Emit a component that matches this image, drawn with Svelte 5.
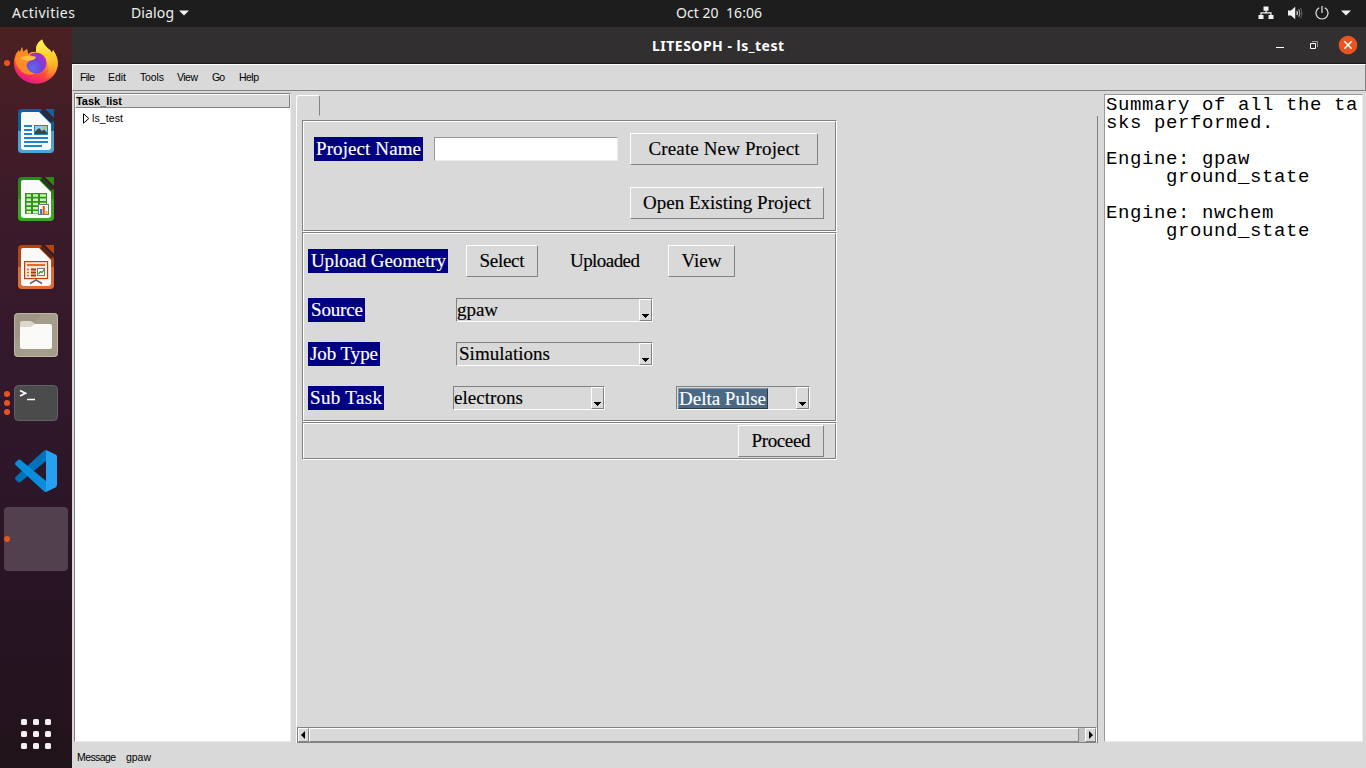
<script>
  // Spreads the letters of a label so that it takes the given width.
  function fit(node, width) {
    const natural = node.getBoundingClientRect().width;
    const gaps = Math.max(1, node.textContent.length - 1);
    node.style.letterSpacing = `${(width - natural) / gaps}px`;
    node.style.marginRight = `${-(width - natural) / gaps}px`;
  }

  const menus = [
    ['File', 15, 13], ['Edit', 18, 14], ['Tools', 24, 13],
    ['View', 21, 14], ['Go', 13, 14], ['Help', 20, 0]
  ];

  const summary = [
    'Summary of all the ta', 'sks performed.', '',
    'Engine: gpaw', '     ground_state', '',
    'Engine: nwchem', '     ground_state'
  ];

  const docs = [
    { kind: 'writer', dark: '#0e639c', light: '#4da3d4' },
    { kind: 'calc', dark: '#2b8a12', light: '#3fa527' },
    { kind: 'impress', dark: '#b3460f', light: '#dd6b33' }
  ];
</script>

{#snippet combo(text, textWidth, cls, selected)}
  <div class="combo {cls}">
    <div class="value" class:selected><span use:fit={textWidth}>{text}</span></div>
    <div class="drop">
      <svg width="7" height="4" viewBox="0 0 7 4" shape-rendering="crispEdges"><path d="M0 0H7V1H6V2H5V3H4V4H3V3H2V2H1V1H0Z" fill="#000" /></svg>
    </div>
  </div>
{/snippet}

<div class="desktop">
  <header class="topbar">
    <span class="activities" use:fit={63}>Activities</span>
    <span class="app" use:fit={43}>Dialog</span>
    <svg class="caret" width="10" height="6" viewBox="0 0 10 6"><path d="M0 .5H10L5 5.5Z" fill="#f2f2f2" /></svg>
    <span class="clock" use:fit={86}>Oct 20&nbsp; 16:06</span>
    <div class="tray">
      <svg width="16" height="14" viewBox="0 0 16 14" fill="#f2f2f2"><path d="M5.500 0.500h5v4.200h-5zM0.500 9h5v4h-5zM10.500 9h5v4h-5z" /><path d="M8 4v3M3 9V6.800h10V9" fill="none" stroke="#f2f2f2" stroke-width="1.200" /></svg>
      <svg class="sound" width="15" height="14" viewBox="0 0 15 14"><path d="M0 4.500h3L7.200 .8v12.400L3 9.500H0Z" fill="#f2f2f2" /><path d="M8.800 5q1.400 2 0 4" fill="none" stroke="#f2f2f2" stroke-width="1.200" /><path d="M10.600 3.300q2.300 3.700 0 7.400" fill="none" stroke="#aaa" stroke-width="1.100" /><path d="M12.400 1.800q3.100 5.200 0 10.400" fill="none" stroke="#666" stroke-width="1" /></svg>
      <svg class="power" width="14" height="14" viewBox="0 0 14 14" fill="none" stroke="#e6e6e6" stroke-width="1.200"><path d="M4.200 1.700a6 6 0 1 0 5.600 0M7 0v7" /></svg>
      <svg class="caret2" width="10" height="6" viewBox="0 0 10 6"><path d="M0 .5H10L5 5.500Z" fill="#f2f2f2" /></svg>
    </div>
  </header>

  <div class="lower">
    <nav class="dock">
      <div class="slot">
        <i class="dots"><b></b></i>
        <svg width="46" height="48" viewBox="0 0 46 48">
          <defs>
            <linearGradient id="fox" x1=".8" y1=".05" x2=".35" y2="1"><stop offset="0" stop-color="#ffe83c" /><stop offset=".38" stop-color="#ffab25" /><stop offset=".7" stop-color="#ff493d" /><stop offset="1" stop-color="#e31587" /></linearGradient>
            <linearGradient id="tail" x1=".4" y1="0" x2=".6" y2="1"><stop offset="0" stop-color="#fff44f" /><stop offset=".55" stop-color="#ffc52a" /><stop offset="1" stop-color="#ff8a20" stop-opacity=".3" /></linearGradient>
            <radialGradient id="globe" cx=".35" cy=".75" r=".8"><stop offset="0" stop-color="#5a6cf0" /><stop offset=".55" stop-color="#7440d8" /><stop offset="1" stop-color="#b52bd0" /></radialGradient>
          </defs>
          <path d="M9 8 10 13 14 10 15 15Q19 12 23 13Q22 5 29 .5Q31 7 37 11L39 14 40 11Q45 19 44.800 26A22 20.500 0 0 1 .9 25Q.7 16 6 11L7 14Z" fill="url(#fox)" />
          <path d="M23 13Q22 5 29 .5Q31 7 37 11L39 14 40 11Q46 19 44.800 27Q42 38 32 40Q38 31 34 23Q31 16 22 15Z" fill="url(#tail)" />
          <circle cx="23" cy="24" r="10.500" fill="url(#globe)" />
          <path d="M2 21Q3 15 7 13L9 8 10 13 14 10 15 15Q18 17 23 18Q22 21 17 21.500Q14 23 13.500 27Q15 33 22 34.500Q15 38 8 32Q3 27 2 21Z" fill="#ff8b24" />
          <path d="M7 19Q13 15 23 18Q22 21 17 21.500Q12 23 7 19Z" fill="#ffbd45" />
        </svg>
      </div>
      {#each docs as doc}
        <div class="slot">
          <svg width="38" height="46" viewBox="0 0 38 46">
            <path d="M5 1H24L37 14V41Q37 45 33 45H5Q1 45 1 41V5Q1 1 5 1Z" fill={doc.dark} />
            <path d="M1 23H37V41Q37 45 33 45H5Q1 45 1 41Z" fill={doc.light} />
            <path d="M28 1H37V10Z" fill={doc.dark} />
            <path d="M6 4H22L34 16V39Q34 42 31 42H7Q4 42 4 39V6Q4 4 6 4Z" fill="#fafafa" />
            <path d="M24 3 35 14" stroke="#1c1420" stroke-width="2.500" opacity=".65" />
            {#if doc.kind === 'writer'}
              <path d="M7 18H15M7 22H15M7 26H15M7 30H31M7 34H31M7 38H25" stroke="#2184c4" stroke-width="2" />
              <rect x="17.500" y="17.500" width="13" height="9" fill="#8fcbf2" stroke="#2184c4" />
              <path d="M18 26V23.500L22 20 25 23 27 21.500 30 24.500V26Z" fill="#444" /><circle cx="28" cy="19.500" r="1.500" fill="#f5b21e" />
            {:else if doc.kind === 'calc'}
              <rect x="8" y="17" width="22" height="21" fill="#2c9713" />
              <path d="M9.500 19.500H14M16 19.500H21M23 19.500H29M9.500 23.700H14M16 23.700H21M23 23.700H29M9.500 28H14M16 28H21M23 28H29M9.500 32.200H14M16 32.200H21M9.500 36.200H14M16 36.200H21" stroke="#cfeec5" stroke-width="2.400" />
              <rect x="21.500" y="28.500" width="10" height="10" fill="#fff" stroke="#777" />
              <path d="M24 38V33" stroke="#2a83c8" stroke-width="2.200" /><path d="M26.700 38V30" stroke="#de5b20" stroke-width="2.200" /><path d="M29.500 38V35" stroke="#f0b020" stroke-width="2.200" />
            {:else}
              <rect x="7.600" y="17.600" width="23" height="17" fill="#fbe7dc" stroke="#b3460f" stroke-width="1.200" />
              <path d="M10 21H28" stroke="#dd6b33" stroke-width="2" />
              <path d="M10 25.500H12M10 28.500H12M10 31.500H12" stroke="#dd6b33" stroke-width="1.700" /><path d="M14 25.500H19M14 28.500H19M14 31.500H19" stroke="#9b3a0a" stroke-width="2" />
              <rect x="20.500" y="24.500" width="7" height="7" fill="#fff" stroke="#777" /><path d="M21.500 30 23.500 27.500 25 28.500 27 25.500" fill="none" stroke="#22a03a" stroke-width="1.300" />
              <path d="M19 35V36M13 39.500 19 36 25 39.500" fill="none" stroke="#666" stroke-width="1.600" />
            {/if}
          </svg>
        </div>
      {/each}
      <div class="slot">
        <svg width="46" height="46" viewBox="0 0 46 46">
          <rect x="1" y="1" width="44" height="44" rx="4" fill="#9e9684" /><path d="M1 41V30L30 1H41Q45 1 45 5V41Q45 45 41 45H5Q1 45 1 41Z" fill="#aaa28f" opacity=".6" /><rect x="1.500" y="1.500" width="43" height="43" rx="4" fill="none" stroke="#bdb6a5" />
          <path d="M7 17V11Q7 9 9 9H17Q19 9 22 12H37V20H7Z" fill="#ddd8cc" />
          <path d="M7 15H18L22 12H37Q39 12 39 14V35Q39 37 37 37H9Q7 37 7 35Z" fill="#fafaf8" />
        </svg>
      </div>
      <div class="slot">
        <i class="dots"><b></b><b></b><b></b></i>
        <svg width="46" height="38" viewBox="0 0 46 38">
          <rect x="1.500" y="1.500" width="43" height="35" rx="4" fill="#4b4b4b" stroke="#626262" />
          <path d="M7 6.500 12.500 9.200 7 12" fill="none" stroke="#fff" stroke-width="1.700" /><path d="M14 15.500H22" stroke="#fff" stroke-width="1.500" />
        </svg>
      </div>
      <div class="slot">
        <svg width="42" height="42" viewBox="0 0 42 42">
          <path d="M31 0V11L5.500 32Q4 33 2.500 31.500L.5 29.500Q-.5 28 .8 26.700L28 1.500Q29.500 0 31 0Z" fill="#0072ba" />
          <path d="M31 42V31L5.500 10Q4 9 2.500 10.500L.5 12.500Q-.5 14 .8 15.300L28 40.500Q29.500 42 31 42Z" fill="#0a8edb" />
          <path d="M31 0 40.500 4.600Q42 5.500 42 7V35Q42 36.500 40.500 37.400L31 42Z" fill="#27a0f1" />
        </svg>
      </div>
      <div class="slot"><div class="tile"></div><i class="dots"><b></b></i></div>
      <div class="apps">{#each Array(9) as _}<b></b>{/each}</div>
    </nav>

    <main class="window">
      <div class="title">
        <span use:fit={132}>LITESOPH - ls_test</span>
        <svg class="controls" width="50" height="20" viewBox="0 0 50 20">
          <path d="M4 12.500H12" stroke="#fff" />
          <path d="M38.500 8.500H43.500V13.500H38.500Z" fill="none" stroke="#fff" /><path d="M40 6.500H45.500V12" fill="none" stroke="#999" />
        </svg>
        <svg width="20" height="20" viewBox="0 0 20 20"><circle cx="10" cy="10" r="9.300" fill="#e95420" /><path d="M6.300 6.300 13.700 13.700M13.700 6.300 6.300 13.700" stroke="#fff" stroke-width="1.500" /></svg>
      </div>

      <div class="menubar">
        {#each menus as [name, width, gap]}
          <div class="menu" style="width:{width}px; margin-right:{gap}px"><span use:fit={width}>{name}</span></div>
        {/each}
      </div>

      <div class="panes">
        <aside class="tree">
          <div class="head"><span use:fit={46}>Task_list</span></div>
          <div class="node">
            <svg width="7" height="11" viewBox="0 0 7 11"><path d="M.5 .8V10.200L5.800 5.500Z" fill="none" stroke="#000" /></svg>
            <span use:fit={31}>ls_test</span>
          </div>
        </aside>

        <section class="notebook">
          <div class="tab"></div>
          <div class="page">
            <div class="form">
              <div class="frame project">
                <div class="row">
                  <div class="label pname"><span use:fit={105}>Project Name</span></div>
                  <div class="entry"></div>
                  <div class="button create"><span use:fit={151}>Create New Project</span></div>
                </div>
                <div class="row"><div class="button open"><span use:fit={168}>Open Existing Project</span></div></div>
              </div>
              <div class="frame task">
                <div class="row upload">
                  <div class="label geometry"><span use:fit={135}>Upload Geometry</span></div>
                  <div class="button select"><span use:fit={45}>Select</span></div>
                  <div class="status"><span use:fit={70}>Uploaded</span></div>
                  <div class="button view"><span use:fit={40}>View</span></div>
                </div>
                <div class="row">
                  <div class="cell"><div class="label source"><span use:fit={52}>Source</span></div></div>
                  {@render combo('gpaw', 41, 'wide', false)}
                </div>
                <div class="row">
                  <div class="cell"><div class="label job"><span use:fit={68}>Job Type</span></div></div>
                  {@render combo('Simulations', 91, 'wide indent', false)}
                </div>
                <div class="row">
                  <div class="cell short"><div class="label sub"><span use:fit={72}>Sub Task</span></div></div>
                  {@render combo('electrons', 69, 'mid', false)}
                  {@render combo('Delta Pulse', 87, 'pulse', true)}
                </div>
              </div>
              <div class="frame action"><div class="button proceed"><span use:fit={59}>Proceed</span></div></div>
            </div>
            <div class="scroll">
              <div class="arrow"><svg width="5" height="8" viewBox="0 0 5 8"><path d="M4 0V8L0 4Z" /></svg></div>
              <div class="thumb"></div>
              <div class="arrow"><svg width="4" height="8" viewBox="0 0 4 8"><path d="M0 0V8L4 4Z" /></svg></div>
            </div>
          </div>
        </section>

        <aside class="summary">
          {#each summary as line}<div class="line">{line}</div>{/each}
        </aside>
      </div>

      <footer class="message"><span use:fit={39}>Message</span><span class="engine" use:fit={25}>gpaw</span></footer>
    </main>
  </div>
</div>

<style>
  :global(body) { margin: 0; overflow: hidden; }
  * { box-sizing: border-box; }
  span { display: inline-block; white-space: pre; flex: none; }
  svg { display: block; flex: none; }
  .desktop { width: 1366px; height: 768px; display: flex; flex-direction: column; background: #d9d9d9; font: 10.5px "Liberation Sans", sans-serif; color: #000; }

  .topbar { height: 27px; flex: none; display: flex; align-items: center; background: #1d1d1d; color: #f0f0f0; font: 14px "Noto Sans", sans-serif; padding: 0 15px 2px 12px; }
  .app { margin-left: 56px; }
  .caret { margin-left: 5px; }
  .clock { margin-left: 487px; }
  .tray { display: flex; align-items: center; margin-left: auto; }
  .sound { margin-left: 14px; }
  .power { margin-left: 12px; }
  .caret2 { margin-left: 12px; }

  .lower { flex: 1; display: flex; min-height: 0; }
  .dock { width: 72px; flex: none; display: flex; flex-direction: column; padding-top: 2px; background: linear-gradient(#4b2022 0%, #3c1b29 23%, #31182c 50%, #281425 73%, #21131a 100%); }
  .slot { position: relative; height: 68px; display: flex; align-items: center; justify-content: center; }
  .dots { position: absolute; left: 4px; top: 0; height: 68px; display: flex; flex-direction: column; justify-content: center; gap: 3px; }
  .dots b { width: 6px; height: 6px; border-radius: 50%; background: #e95420; }
  .tile { width: 64px; height: 64px; border-radius: 4px; background: #52404e; }
  .apps { display: grid; grid-template-columns: repeat(3, 6px); gap: 6px; margin: 146px auto 0; }
  .apps b { width: 6px; height: 6px; border-radius: 1.5px; background: #f2f0f0; }

  .window { flex: 1; min-width: 0; display: flex; flex-direction: column; }
  .title { height: 37px; flex: none; display: flex; align-items: center; background: #322f30; border-bottom: 1px solid #1b1919; color: #fff; font: bold 14px "Noto Sans", sans-serif; padding: 0 8px 0 580px; }
  .controls { margin-left: auto; margin-right: 16px; }

  .menubar { height: 27px; flex: none; display: flex; align-items: center; padding: 0 0 1px 7px; border: 1px solid; border-color: #fff #828282 #828282 #fff; }
  .menu { flex: none; }

  .panes { height: 652px; flex: none; display: flex; padding-left: 2px; }
  .tree { width: 217px; height: 649px; margin-top: 2px; background: #fff; border: 1px solid; border-color: #828282 #ececec #ececec #828282; }
  .head { height: 14px; background: #d9d9d9; border: 1px solid; border-color: #fff #828282 #828282 #fff; font-size: 11px; line-height: 13px; font-weight: bold; }
  .node { display: flex; align-items: center; height: 20px; padding-left: 8px; gap: 2px; }

  .notebook { width: 802px; height: 648px; margin: 4px 0 0 5px; display: flex; flex-direction: column; }
  .tab { width: 24px; height: 21px; border: 1px solid; border-color: #fff #828282 transparent #fff; border-radius: 3px 3px 0 0; flex: none; }
  .page { flex: 1; display: flex; flex-direction: column; border-left: 1px solid #fff; border-right: 1px solid #828282; padding-top: 4px; }
  .form { width: 535px; margin-left: 5px; font: 19px "Liberation Serif", serif; }
  .form span { line-height: 20px; -webkit-text-stroke: .15px; }
  .frame { position: relative; border: 1px solid; border-color: #828282 #fff #fff #828282; }
  .frame::before { content: ''; position: absolute; inset: 0; border: 1px solid; border-color: #fff #828282 #828282 #fff; pointer-events: none; }
  .project { height: 112px; padding: 12px 0 0 11px; display: flex; flex-direction: column; gap: 22px; }
  .task { height: 190px; padding: 12px 0 0 5px; display: flex; flex-direction: column; gap: 20px; }
  .action { height: 38px; padding: 2px 12px 0 0; display: flex; justify-content: flex-end; }
  .row { display: flex; align-items: center; }
  .upload { margin-bottom: 1px; }
  .label { height: 24px; background: #000080; color: #fff; display: flex; align-items: center; padding-left: 3px; flex: none; }
  .pname { width: 109px; padding-left: 2px; }
  .geometry { width: 140px; }
  .source { width: 57px; }
  .job { width: 72px; padding-left: 2px; }
  .sub { width: 76px; padding-left: 2px; }
  .cell { width: 148px; flex: none; }
  .cell.short { width: 145px; }
  .entry { width: 184px; height: 24px; margin: 0 12px 0 11px; background: #fff; border: 1px solid; border-color: #999 #ececec #ececec #999; }
  .button { height: 32px; display: flex; align-items: center; justify-content: center; border: 1px solid; border-color: #fff #828282 #828282 #fff; flex: none; }
  .create { width: 188px; }
  .open { width: 194px; margin-left: 316px; }
  .select { width: 72px; margin-left: 18px; }
  .status { width: 130px; padding-left: 32px; }
  .view { width: 67px; }
  .proceed { width: 86px; }
  .combo { height: 24px; display: flex; justify-content: space-between; border: 1px solid; border-color: #828282 #fff #fff #828282; flex: none; }
  .wide { width: 197px; }
  .mid { width: 152px; }
  .pulse { width: 134px; margin-left: 71px; }
  .value { display: flex; align-items: center; }
  .indent .value { padding-left: 2px; }
  .selected { width: 90px; height: 21px; margin: 1px 0 0 1px; background: #4a6984; color: #fff; border: 1px solid; border-color: #8196aa #293b4a #293b4a #8196aa; }
  .drop { width: 13px; border: 1px solid; border-color: #fff #828282 #828282 #fff; display: flex; align-items: flex-end; justify-content: center; padding-bottom: 2px; }

  .scroll { height: 16px; margin-top: auto; display: flex; background: #c3c3c3; border: 1px solid; border-color: #828282 #fff #828282 #828282; }
  .arrow { width: 11px; display: flex; align-items: center; justify-content: center; background: #d9d9d9; border: 1px solid; border-color: #fff #828282 #828282 #fff; flex: none; }
  .thumb { width: 770px; margin-right: auto; background: #d9d9d9; border: 1px solid; border-color: #fff #828282 #828282 #fff; }

  .summary { width: 259px; height: 648px; margin: 3px 0 0 6px; padding: 1px 0 0 1px; background: #fff; border: 1px solid; border-color: #999 #ececec #ececec #999; font: 19px "Liberation Mono", monospace; letter-spacing: .598px; overflow: hidden; }
  .line { height: 18px; line-height: 18px; white-space: pre; }

  .message { flex: 1; padding: 8px 0 0 5px; }
  .engine { position: relative; left: 10px; }
</style>
